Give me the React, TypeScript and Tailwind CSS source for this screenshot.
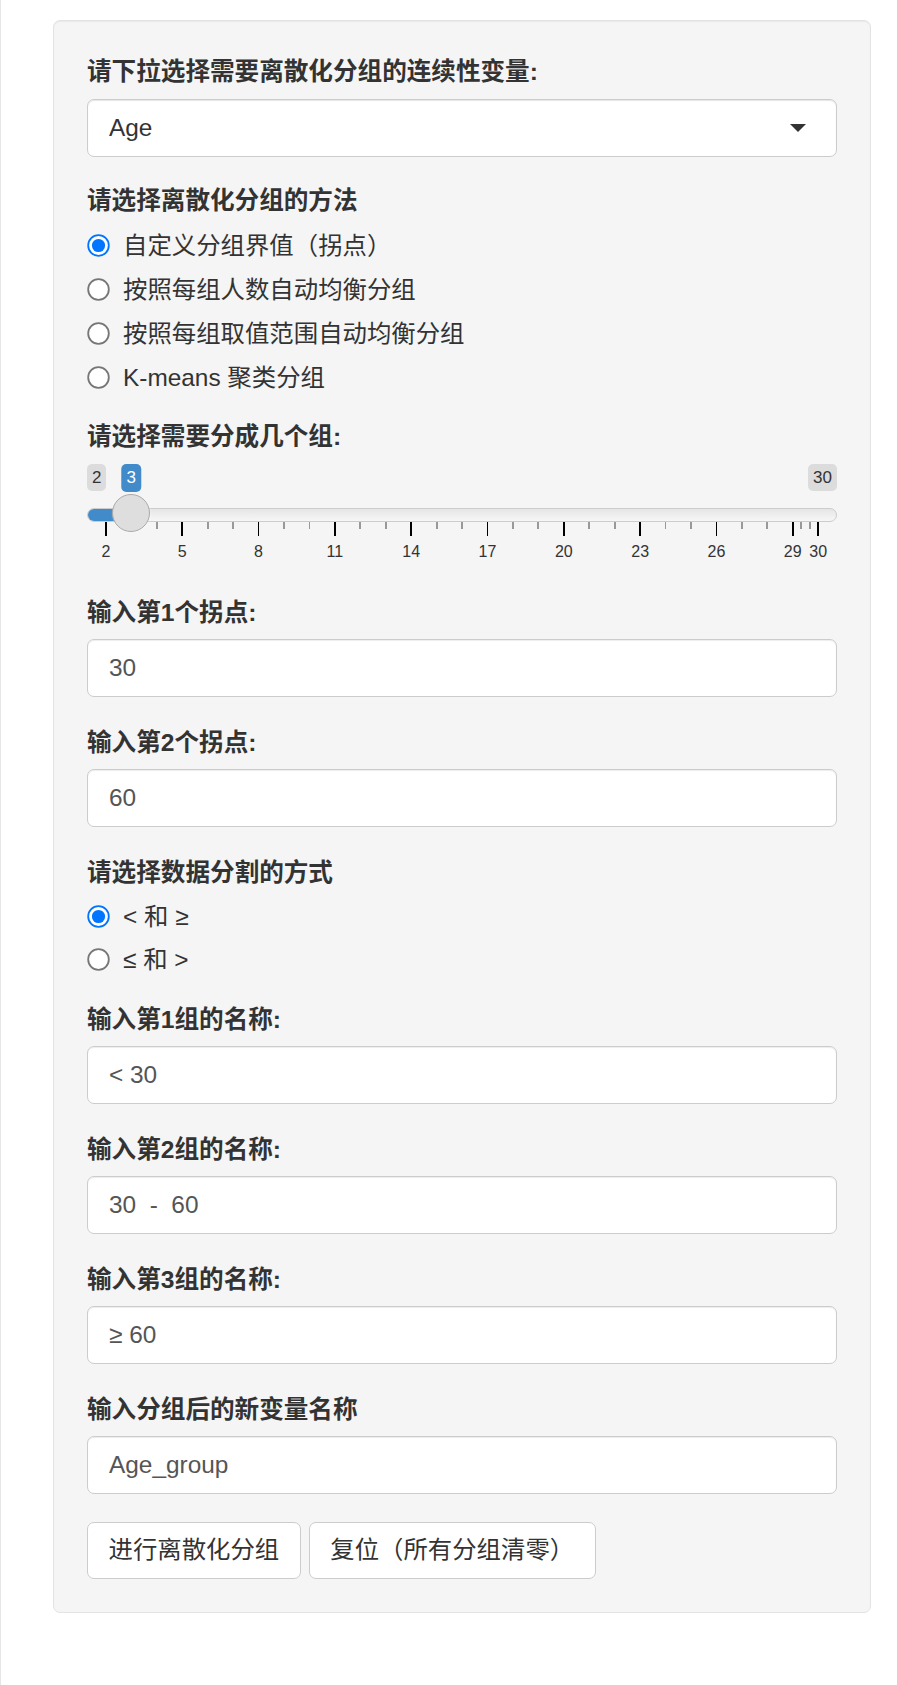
import React from "react";

const FONT = "font-['Liberation_Sans','Noto_Sans_CJK_SC',sans-serif]";

function Label({ text, className = "" }: { text: string; className?: string }) {
  return (
    <div className={`h-[35px] leading-[35px] text-[24.6px] font-bold text-[#333] whitespace-nowrap ${className}`}>
      {text}
    </div>
  );
}

function TextInput({ value }: { value: string }) {
  return (
    <div className="mt-[9px] h-[58px] bg-white border border-[#cccccc] rounded-[7px] shadow-[inset_0_1px_1px_rgba(0,0,0,0.075)] flex items-center pl-[21px] text-[24.4px] text-[#555] whitespace-pre">
      {value}
    </div>
  );
}

function Radio({ checked, text, h }: { checked: boolean; text: string; h: string }) {
  return (
    <div className={`flex items-center ${h}`}>
      <svg width="23" height="23" viewBox="0 0 23 23" className="shrink-0">
        {checked ? (
          <>
            <circle cx="11.5" cy="11.5" r="10.3" fill="#ffffff" stroke="#0075ff" strokeWidth="1.8" />
            <circle cx="11.5" cy="11.5" r="6.6" fill="#0075ff" />
          </>
        ) : (
          <circle cx="11.5" cy="11.5" r="10.3" fill="#ffffff" stroke="#767676" strokeWidth="1.8" />
        )}
      </svg>
      <span className="ml-[13px] text-[24.4px] text-[#333] leading-[35px] whitespace-nowrap">{text}</span>
    </div>
  );
}

function Slider() {
  const left = 18.9;
  const step = 25.44;
  const pos = (v: number) => left + (v - 2) * step;
  const majors = [2, 5, 8, 11, 14, 17, 20, 23, 26, 29, 30];
  const minors: number[] = [];
  for (let v = 2; v < 29; v++) {
    if ((v - 2) % 3 !== 0) minors.push(v);
  }
  minors.push(29 + 1 / 3, 29 + 2 / 3);
  const handle = pos(3);
  return (
    <div className="relative h-[141px] pt-[10px]">
      <div className="flex justify-between">
        <div className="h-[27px] leading-[27px] px-[5px] rounded-[5px] bg-[#dcdcdc] text-[17px] text-[#333]">2</div>
        <div className="h-[27px] leading-[27px] px-[5px] rounded-[5px] bg-[#dcdcdc] text-[17px] text-[#333]">30</div>
      </div>
      <div className="mt-[17px] h-[14px] rounded-full border border-[#cccccc] bg-[linear-gradient(to_bottom,#dddddd_-50%,#ffffff_150%)] overflow-hidden">
        <div className="h-full bg-[#428bca]" style={{ width: handle }} />
      </div>
      <div
        className="absolute top-[10px] h-[28px] leading-[28px] px-[5px] rounded-[5px] bg-[#428bca] text-[17px] text-white -translate-x-1/2"
        style={{ left: handle }}
      >
        3
      </div>
      {minors.map((v, i) => (
        <div
          key={"m" + i}
          className="absolute top-[68px] h-[7px] w-[1.8px] bg-[#999999]"
          style={{ left: pos(v) - 0.9 }}
        />
      ))}
      {majors.map((v) => (
        <div
          key={"M" + v}
          className="absolute top-[68px] h-[14px] w-[1.8px] bg-[#000000]"
          style={{ left: pos(v) - 0.9 }}
        />
      ))}
      {majors.map((v) => (
        <div
          key={"t" + v}
          className="absolute top-[88px] h-[20px] leading-[20px] text-[16px] text-[#333] -translate-x-1/2"
          style={{ left: pos(v) }}
        >
          {v}
        </div>
      ))}
      <div
        className="absolute top-[40px] w-[38px] h-[38px] rounded-full border-[1.7px] border-[#aaaaaa] bg-[#dedede] shadow-[1px_1px_3px_rgba(255,255,255,0.3)] -translate-x-1/2"
        style={{ left: handle }}
      />
    </div>
  );
}

export default function App() {
  return (
    <div className={`min-h-[1685px] bg-white border-l border-[#e6e6e6] pt-[20px] pl-[52px] ${FONT}`}>
      <div className="w-[818px] bg-[#f5f5f5] border border-[#e3e3e3] rounded-[7px] px-[33px] pt-[33px] pb-[33px] shadow-[inset_0_1px_1px_rgba(0,0,0,0.05)]">
        <Label text="请下拉选择需要离散化分组的连续性变量:" />
        <div className="mt-[10px] h-[58px] bg-white border border-[#cccccc] rounded-[7px] shadow-[inset_0_1px_1px_rgba(0,0,0,0.1)] flex items-center justify-between pl-[21px] pr-[30px]">
          <span className="text-[24.4px] text-[#333]">Age</span>
          <span className="w-0 h-0 border-l-[8px] border-r-[8px] border-t-[8px] border-l-transparent border-r-transparent border-t-[#333]" />
        </div>

        <Label text="请选择离散化分组的方法" className="mt-[26px]" />
        <div className="mt-[5px]">
          <Radio checked text="自定义分组界值（拐点）" h="h-[44px]" />
          <Radio checked={false} text="按照每组人数自动均衡分组" h="h-[44px]" />
          <Radio checked={false} text="按照每组取值范围自动均衡分组" h="h-[44px]" />
          <Radio checked={false} text="K-means 聚类分组" h="h-[44px]" />
        </div>

        <Label text="请选择需要分成几个组:" className="mt-[20px]" />
        <Slider />

        <Label text="输入第1个拐点:" />
        <TextInput value="30" />

        <Label text="输入第2个拐点:" className="mt-[28px]" />
        <TextInput value="60" />

        <Label text="请选择数据分割的方式" className="mt-[28px]" />
        <div className="mt-[5px]">
          <Radio checked text="< 和 ≥" h="h-[43px]" />
          <Radio checked={false} text="≤ 和 >" h="h-[43px]" />
        </div>

        <Label text="输入第1组的名称:" className="mt-[21px]" />
        <TextInput value="< 30" />

        <Label text="输入第2组的名称:" className="mt-[28px]" />
        <TextInput value="30  -  60" />

        <Label text="输入第3组的名称:" className="mt-[28px]" />
        <TextInput value="≥ 60" />

        <Label text="输入分组后的新变量名称" className="mt-[28px]" />
        <TextInput value="Age_group" />

        <div className="mt-[28px] flex gap-[8px]">
          <button className="h-[57px] px-[20.5px] bg-white border border-[#cccccc] rounded-[7px] text-[24.4px] text-[#333] whitespace-nowrap">
            进行离散化分组
          </button>
          <button className="h-[57px] px-[20.5px] bg-white border border-[#cccccc] rounded-[7px] text-[24.4px] text-[#333] whitespace-nowrap">
            复位（所有分组清零）
          </button>
        </div>
      </div>
    </div>
  );
}
